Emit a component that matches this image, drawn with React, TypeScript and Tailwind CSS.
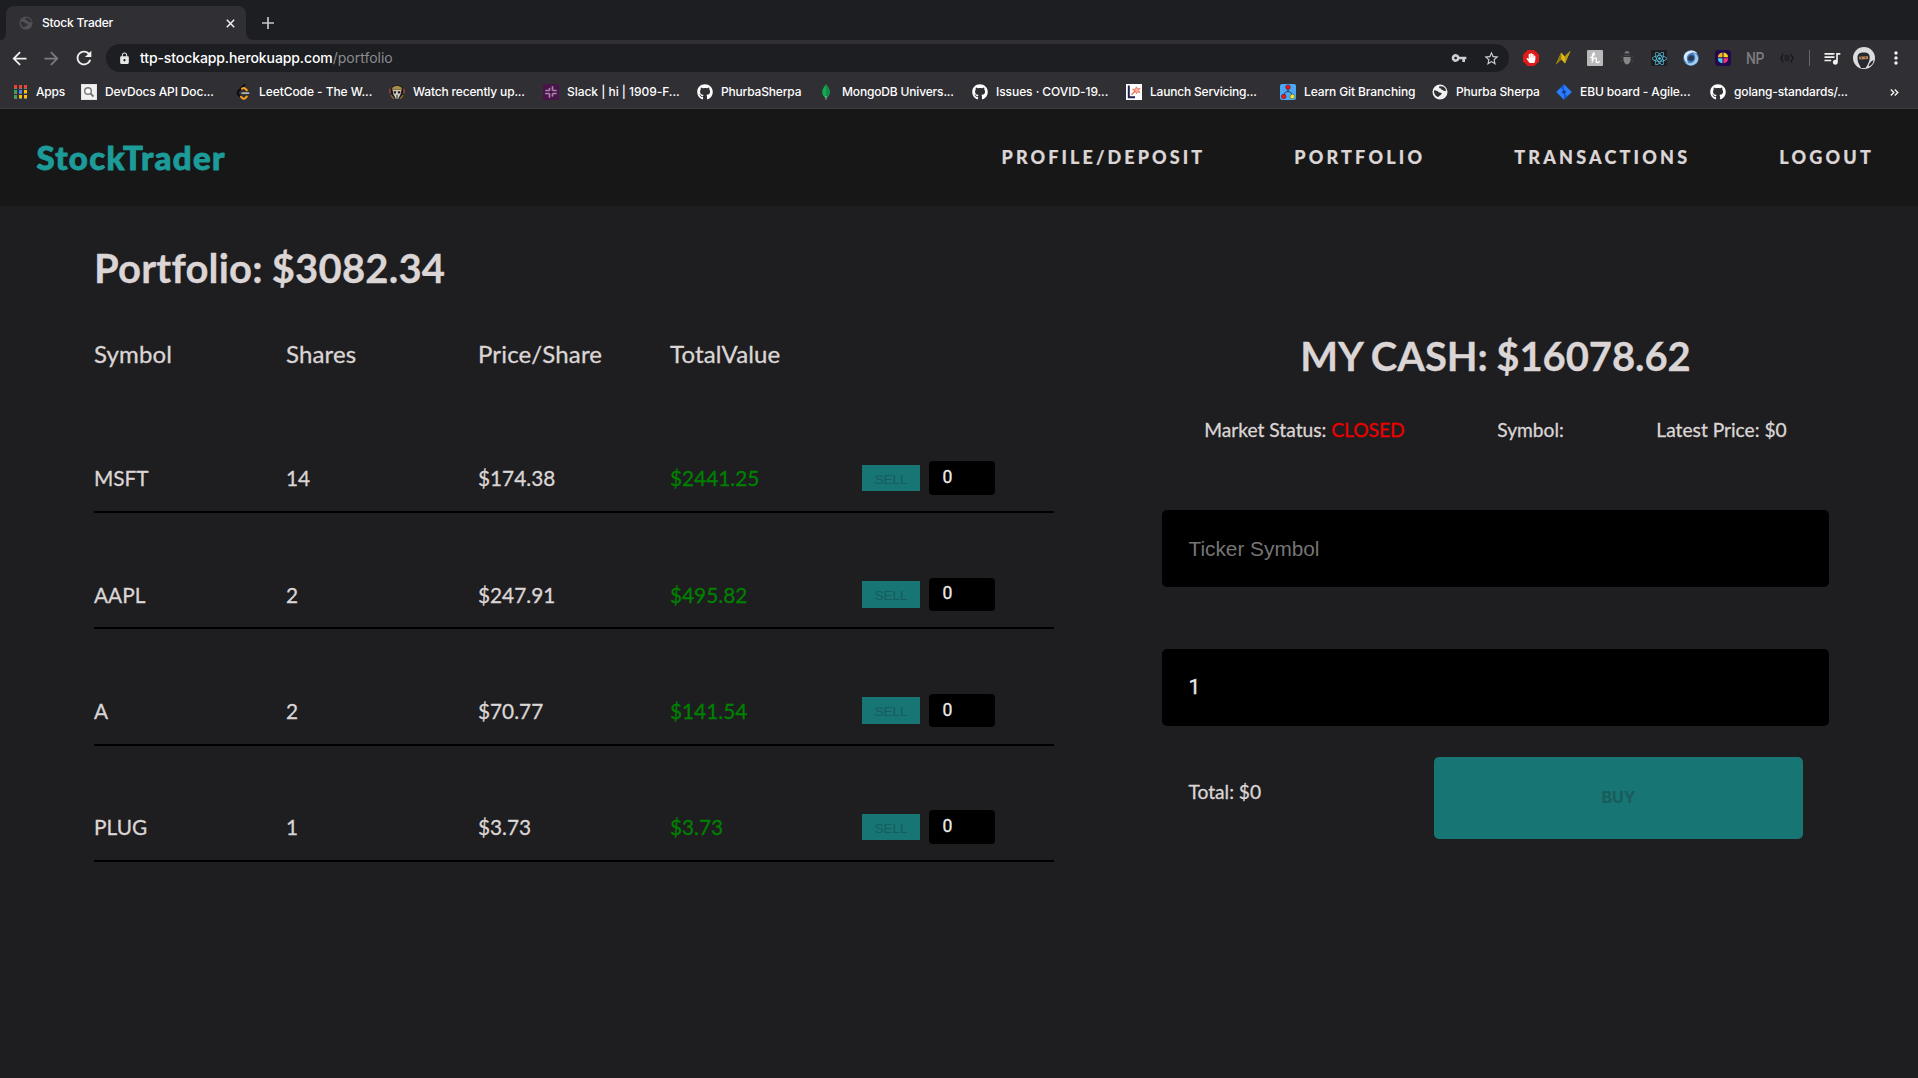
import type { ReactNode } from "react";
import { FaGithub, FaHandPaper, FaReact } from "react-icons/fa";
import {
  MdArrowBack,
  MdArrowForward,
  MdLock,
  MdMoreVert,
  MdQueueMusic,
  MdRefresh,
  MdStarBorder,
  MdVpnKey,
} from "react-icons/md";

function GlobeIcon({ disc, land, size }: { disc: string; land: string; size: number }) {
  return (
    <svg width={size} height={size} viewBox="0 0 16 16">
      <circle cx="8" cy="8" r="7.5" fill={disc} />
      <path d="M2 6.2c2 .3 3.400.2 4.200 1.500.7 1 2.300.5 3.200 1.300.8.9-.2 1.900-1.200 2.200-1.200.4-1.200 1.800-2.300 1.700C3.600 12.300 1.700 9.500 2 6.200z" fill={land} />
      <path d="M7.300 2.400c-.6 1-.1 1.800.9 1.900 1 .1.700 1.300 1.700 1.500 1.300.3 1.500 1.300 2.700 1.200l1.600-.3c-.5-2.700-2.800-4.900-6.900-4.300z" fill={land} />
    </svg>
  );
}

function AppsIcon() {
  const colors = ["#ea4335", "#ea4335", "#ea4335", "#34a853", "#4285f4", "#fbbc04", "#34a853", "#fbbc04", "#fbbc04"];
  return (
    <div className="grid h-[14px] w-[13px] grid-cols-3 gap-x-[2px] gap-y-px">
      {colors.map((c, i) => (
        <span key={i} className="border-b border-[#7b7b7b]" style={{ backgroundColor: c }} />
      ))}
    </div>
  );
}

function DevDocsIcon() {
  return (
    <svg width="16" height="16" viewBox="0 0 16 16">
      <rect width="16" height="16" fill="#e4e4e4" />
      <rect x="1" y="1" width="14" height="14" fill="#f1f1f1" />
      <circle cx="7" cy="7" r="3.300" fill="#fafafa" stroke="#777" strokeWidth="1.400" />
      <path d="M9.500 9.500l3 3" stroke="#777" strokeWidth="1.800" />
    </svg>
  );
}

function LeetCodeIcon() {
  return (
    <svg width="16" height="16" viewBox="0 0 16 16" fill="none" strokeLinecap="round">
      <path d="M9.500 1L3.500 7c-1.200 1.200-1.200 2.500 0 3.700L5 12.200" stroke="#0d0d0d" strokeWidth="2" />
      <path d="M7 4.800c1.200-1 2.300-1 3.300 0L11.800 6.300M6 12.800l1.200 1.200c1 1 2.200 1 3.200 0l1.400-1.500" stroke="#f9a11b" strokeWidth="2" />
      <path d="M7.200 9.200H13.500" stroke="#b3b3b3" strokeWidth="1.800" />
    </svg>
  );
}

function MaskIcon() {
  return (
    <svg width="17" height="16" viewBox="0 0 17 16">
      <path d="M3 2.500C5 .5 12 .5 14 2.500l1.500 4.500-1.200 4L12 14H5l-2.300-3-1.200-4z" fill="#1c1b1c" />
      <path d="M3.500 3.500C6 1 11 1 13.500 3.500l.3 2H3.200z" fill="#a98d4b" />
      <path d="M1 4.500v5M16 4.500v5" stroke="#b6403c" strokeWidth="1.400" />
      <path d="M3.800 5.800h9.400l-1 4.700L10 15H7l-2.200-4.500z" fill="#cfcabf" />
      <path d="M4.800 7.200h3l-.6 2.300H5.500zM9.200 7.200h3l-.7 2.300H9.800zM8 11h1v3.500H8z" fill="#1c1b1c" />
      <path d="M2 11.500l3.200 3.800M15 11.500l-3.200 3.800" stroke="#8c6c2c" strokeWidth="1.400" />
    </svg>
  );
}

function SlackIcon() {
  return (
    <svg width="16" height="16" viewBox="0 0 16 16" fill="none" stroke="#a883a8" strokeWidth="1.700" strokeLinecap="round">
      <rect width="16" height="16" fill="#48154b" stroke="none" />
      <path d="M6.500 4.500V6M9.500 2.800V6M3 6.500h3M10.800 6.500h2.200M2.800 9.500h2.400M6.500 9.900v3.200M9.500 10v1.800M10 9.500h3" />
    </svg>
  );
}

function MongoIcon() {
  return (
    <svg width="16" height="16" viewBox="0 0 16 16">
      <path d="M8 .3C9.500 3 11.800 4.600 11.800 8c0 2.800-1.700 4.800-3.400 6H7.600C5.900 12.800 4.200 10.800 4.200 8 4.200 4.600 6.500 3 8 .3z" fill="#13aa52" />
      <path d="M8 .3C9.500 3 11.800 4.600 11.800 8c0 2.800-1.700 4.800-3.400 6H8z" fill="#108c45" />
      <path d="M8 12v3.800" stroke="#a5b5a8" strokeWidth=".9" />
    </svg>
  );
}

function LaunchIcon() {
  return (
    <svg width="16" height="16" viewBox="0 0 16 16">
      <rect width="16" height="16" fill="#fff" />
      <path d="M2.800 1.500v11.800H9" stroke="#1f2352" strokeWidth="2" fill="none" />
      <path d="M5.500 10.800L9.500 6.800" stroke="#f0694f" strokeWidth="1.300" />
      <path d="M9.300 6.900L6.500 5.500l3-.4.8-2.300 1.300 2.100 2.500-.7-1.500 2.100 1.200 2.200-2.400-.6-1 1.800z" stroke="#f0694f" strokeWidth=".8" fill="#f8b4a6" />
    </svg>
  );
}

function GitBranchingIcon() {
  return (
    <svg width="16" height="16" viewBox="0 0 16 16">
      <rect width="16" height="16" rx="2" fill="#4aa8f5" />
      <path d="M8 3v4M4 11.500C4 9 6 7.500 8 7.500s4 1.500 4 4" stroke="#1d3850" strokeWidth="1" fill="none" />
      <circle cx="8" cy="3.200" r="2.300" fill="#f01414" stroke="#5a1c2c" strokeWidth=".6" />
      <circle cx="3.700" cy="12.500" r="2.300" fill="#f01414" stroke="#5a1c2c" strokeWidth=".6" />
      <circle cx="12.300" cy="12.500" r="2.300" fill="#f2ee2c" stroke="#5f6130" strokeWidth=".6" />
    </svg>
  );
}

function JiraIcon() {
  return (
    <svg width="16" height="16" viewBox="0 0 16 16">
      <path d="M8 .2L15.800 8 8 15.800.2 8z" fill="#2a7bff" />
      <path d="M8 .2L4.500 3.700 8 7zM8 15.800l3.500-3.500L8 9z" fill="#1558d0" />
      <path d="M8 5.800L10.200 8 8 10.200 5.800 8z" fill="#123a86" />
    </svg>
  );
}

const bookmarks: { label: string; icon: ReactNode; cell: string; tracking: string }[] = [
  { label: "Apps", icon: <AppsIcon />, cell: "w-[69px]", tracking: "tracking-[-0.2px]" },
  { label: "DevDocs API Doc...", icon: <DevDocsIcon />, cell: "w-[154px]", tracking: "tracking-[-0.15px]" },
  { label: "LeetCode - The W...", icon: <LeetCodeIcon />, cell: "w-[154px]", tracking: "tracking-[-0.07px]" },
  { label: "Watch recently up...", icon: <MaskIcon />, cell: "w-[154px]", tracking: "tracking-[-0.16px]" },
  { label: "Slack | hi | 1909-F...", icon: <SlackIcon />, cell: "w-[154px]", tracking: "tracking-[-0.04px]" },
  { label: "PhurbaSherpa", icon: <FaGithub size={16} />, cell: "w-[121px]", tracking: "tracking-[-0.18px]" },
  { label: "MongoDB Univers...", icon: <MongoIcon />, cell: "w-[154px]", tracking: "tracking-[-0.16px]" },
  { label: "Issues · COVID-19...", icon: <FaGithub size={16} />, cell: "w-[154px]", tracking: "tracking-[-0.07px]" },
  { label: "Launch Servicing...", icon: <LaunchIcon />, cell: "w-[154px]", tracking: "tracking-[-0.2px]" },
  { label: "Learn Git Branching", icon: <GitBranchingIcon />, cell: "w-[152px]", tracking: "tracking-[-0.12px]" },
  { label: "Phurba Sherpa", icon: <GlobeIcon disc="#f1f1f1" land="#303135" size={16} />, cell: "w-[124px]", tracking: "tracking-[-0.15px]" },
  { label: "EBU board - Agile...", icon: <JiraIcon />, cell: "w-[154px]", tracking: "tracking-[-0.1px]" },
  { label: "golang-standards/...", icon: <FaGithub size={16} />, cell: "w-[154px]", tracking: "tracking-[-0.15px]" },
];

const extensions: ReactNode[] = [
  <span className="grid size-4 place-items-center bg-[#e01a1a] text-white [clip-path:polygon(29%_0,71%_0,100%_29%,100%_71%,71%_100%,29%_100%,0_71%,0_29%)]">
    <FaHandPaper size={10} />
  </span>,
  <svg width="16" height="16" viewBox="0 0 16 16">
    <path d="M.8 14.500L6.200 2.500l3.500 4L15.500.8 10 13.500l-3.600-4z" fill="#e0b91c" />
    <path d="M.8 14.500l5.600-5-.2-7z" fill="#94790f" />
    <path d="M10 13.500l-.3-7L15.500.8z" fill="#b8960f" />
  </svg>,
  <svg width="16" height="16" viewBox="0 0 16 16">
    <rect width="16" height="16" rx="1" fill="#b9b9b9" />
    <path d="M3.500 7.500C6 6.500 7.800 4.500 7.300 3.200c-.8-1.200-2 1.300-2 4.300v5c.2-2.500 1.400-4.600 3-4.600 1.800 0 .8 2.600.9 3.700.1 1.500 1.800 1.300 3.300 0" fill="none" stroke="#fff" strokeWidth="1.300" strokeLinecap="round" />
  </svg>,
  <svg width="16" height="16" viewBox="0 0 16 16">
    <path d="M5.500 3.500a2.500 2.500 0 015 0z" fill="#777" />
    <path d="M4.500 5h7v1h-7z" fill="#484848" />
    <path d="M4.500 7h7c.6 3.500-1 7.500-3.500 7.500S3.900 10.500 4.500 7z" fill="#868686" />
    <path d="M1.500 6l2 1.500M14.500 6l-2 1.500M1.500 11h2M12.500 11h2" stroke="#484848" />
  </svg>,
  <span className="grid size-4 place-items-center bg-[#1e1e1e] text-[#5accf0]">
    <FaReact size={15} />
  </span>,
  <svg width="16" height="16" viewBox="0 0 16 16">
    <circle cx="8" cy="8" r="7.800" fill="#3f7fc4" />
    <path d="M2.500 3C6-.8 12-.2 14.500 3.500 10.500 1.500 6 2.500 4.300 6c-1.300 3 0 6 2.200 7.800C1.500 12.500-.8 6.800 2.500 3z" fill="#dbe9f7" />
    <path d="M13.500 13c-4 3.800-9 2.800-11.500-.8 4 2.300 8.300 1 9.700-2.200 1.300-3 .3-5.800-2-7.500 5 .8 7.300 6.700 3.800 10.500z" fill="#a9cbea" />
    <path d="M5.200 9.500C4.500 7 6.500 4.800 9 5.300c2 .4 2.600 2.500 1.700 4.200-1 1.900-4.700 2.300-5.500 0z" fill="#2b3a58" />
  </svg>,
  <svg width="16" height="16" viewBox="0 0 16 16">
    <rect width="16" height="16" rx="3.500" fill="#1e0a4c" />
    <path d="M7.500 2.500v4.700H2.800A5.300 5.300 0 017.500 2.500z" fill="#f5b22c" />
    <path d="M8.500 2.500a5.300 5.300 0 014.700 4.700H8.500z" fill="#ffd21f" />
    <path d="M2.800 8.200h4.700v5a5.300 5.300 0 01-4.700-5z" fill="#4cc9ec" />
    <path d="M8.500 8.200h4.700a5.300 5.300 0 01-4.700 5z" fill="#f0357f" />
  </svg>,
  <span className="scale-x-[0.82] font-['Roboto'] text-[17px] leading-none font-medium tracking-[-0.5px] text-[#7b7b7e]">NP</span>,
  <svg width="16" height="16" viewBox="0 0 16 16" fill="none" stroke="#151517" strokeWidth="1.200">
    <path d="M4.500 4C2.500 4 4 7.500 1.500 8 4 8.500 2.500 12 4.500 12M11.500 4c2 0 .5 3.500 3 4-2.500.5-1 4-3 4M5.500 6h5M5.500 8h5M5.500 10h5" />
  </svg>,
];

function Avatar() {
  return (
    <svg width="22" height="22" viewBox="0 0 22 22">
      <circle cx="11" cy="11" r="11" fill="#dcdcdc" />
      <path d="M4.500 10.500c0-3.800 2.500-5 6.200-5s6 1.200 6 5c0 3-1.200 5.500-2.500 8L12.500 21H8l-1.500-3c-1.200-2-2-4.500-2-7.500z" fill="#26292f" />
      <path d="M6 9.800l9-.5v2.700l-8.500.5z" fill="#c98e5c" />
      <path d="M7.500 11h1.700M11.800 10.800h1.700" stroke="#222" strokeWidth="1" />
      <path d="M15.500 19.500c.3-3 2-5 5-6.500-.2 3-1.800 5.500-5 6.500z" fill="#26292f" />
    </svg>
  );
}

function Browser() {
  return (
    <div className="h-[109px] w-full border-b border-[#3a393e] bg-[#302f34] font-['Inter',sans-serif] text-white">
      <div className="flex h-10 items-end bg-[#1d1e22]">
        <svg width="6" height="8" viewBox="0 0 6 8">
          <path d="M0 8C4 8 6 5 6 0v8z" fill="#302f34" />
        </svg>
        <div className="flex h-[34px] w-60 items-center rounded-t-lg bg-[#302f34] pl-[13px]">
          <GlobeIcon disc="#505156" land="#302f34" size={14} />
          <span className="ml-[9px] flex-1 text-xs font-medium tracking-[-0.2px]">Stock Trader</span>
          <svg width="9" height="9" viewBox="0 0 9 9" className="mr-[11px]">
            <path d="M.8.8l7.400 7.400M8.200.8L.8 8.200" stroke="#f1f1f1" strokeWidth="1.500" />
          </svg>
        </div>
        <svg width="8" height="8" viewBox="0 0 8 8">
          <path d="M8 8C3 8 0 5 0 0v8z" fill="#302f34" />
        </svg>
        <svg width="12" height="12" viewBox="0 0 12 12" className="mb-[11px] ml-2">
          <path d="M6 0v12M0 6h12" stroke="#c4c5c8" strokeWidth="1.700" />
        </svg>
      </div>

      <div className="flex h-9 items-center">
        <div className="flex w-[106px] items-center gap-[11px] pl-[9px] text-[#f1f1f1]">
          <MdArrowBack size={21} />
          <MdArrowForward size={21} className="text-[#7d7d81]" />
          <MdRefresh size={22} />
        </div>
        <div className="flex h-7 w-[1403px] items-center rounded-full bg-[#1d1e22] pl-3 text-sm leading-none">
          <MdLock size={13} className="text-[#e6e6e6]" />
          <span className="ml-[9px] font-medium tracking-[-0.1px]">ttp-stockapp.herokuapp.com</span>
          <span className="flex-1 text-[#8b8c90]">/portfolio</span>
          <div className="flex text-[#cfcfd2]">
            <span className="grid w-8 place-items-center">
              <MdVpnKey size={16} />
            </span>
            <span className="mr-[2px] grid w-8 place-items-center">
              <MdStarBorder size={17} />
            </span>
          </div>
        </div>
        <div className="ml-[6px] flex">
          {extensions.map((icon, i) => (
            <span key={i} className="grid h-4 w-8 place-items-center">
              {icon}
            </span>
          ))}
        </div>
        <span className="ml-[6px] h-4 w-px bg-[#66666b]" />
        <MdQueueMusic size={20} className="ml-3 text-[#f1f1f1]" />
        <span className="ml-[11px]">
          <Avatar />
        </span>
        <MdMoreVert size={20} className="ml-[11px] text-[#f1f1f1]" />
      </div>

      <div className="flex h-8 items-center pl-[12px]">
        {bookmarks.map((b) => (
          <div key={b.label} className={`flex shrink-0 items-center ${b.cell}`}>
            <span className="mr-2 flex w-4 shrink-0 justify-center">{b.icon}</span>
            <span className={`text-xs leading-4 font-medium whitespace-nowrap ${b.tracking}`}>{b.label}</span>
          </div>
        ))}
        <svg width="9" height="7" viewBox="0 0 9 7" className="ml-[26px]" fill="none" stroke="#f1f1f1" strokeWidth="1.400">
          <path d="M.8.500l3 3-3 3M4.800.500l3 3-3 3" />
        </svg>
      </div>
    </div>
  );
}

const holdings = [
  { symbol: "MSFT", shares: "14", price: "$174.38", total: "$2441.25" },
  { symbol: "AAPL", shares: "2", price: "$247.91", total: "$495.82" },
  { symbol: "A", shares: "2", price: "$70.77", total: "$141.54" },
  { symbol: "PLUG", shares: "1", price: "$3.73", total: "$3.73" },
];

function Holdings() {
  return (
    <section className="w-[960px] pt-[37.500px]">
      <h1 className="text-[40px] leading-[48px] font-bold tracking-[0.200px] [word-spacing:-1px]">Portfolio: $3082.34</h1>
      <div className="mt-[47px] grid grid-cols-5 text-2xl leading-[29px] tracking-[0.15px]">
        <span>Symbol</span>
        <span>Shares</span>
        <span>Price/Share</span>
        <span>TotalValue</span>
      </div>
      <div className="mt-[29.400px]">
        {holdings.map((h) => (
          <div key={h.symbol} className="grid h-[116.250px] grid-cols-5 items-end border-b-2 border-black text-[20.800px] leading-[25px]">
            <span className="pb-[20.700px]">{h.symbol}</span>
            <span className="pb-[20.700px]">{h.shares}</span>
            <span className="pb-[20.700px]">{h.price}</span>
            <span className="pb-[20.700px] text-[#008000]">{h.total}</span>
            <div className="flex items-center gap-[9px] pb-[16.400px]">
              <button className="h-[26.500px] w-[58px] bg-[#177573] pt-[3px] font-['Liberation_Sans',sans-serif] text-[13.330px] leading-none text-[#185c5c] [-webkit-text-stroke:0px]">
                SELL
              </button>
              <div className="flex h-[33.500px] w-[66px] items-center rounded-[4px] bg-black pl-[13.500px] font-['Roboto',sans-serif] text-[17.600px] leading-none text-[#efebeb]">
                0
              </div>
            </div>
          </div>
        ))}
      </div>
    </section>
  );
}

function Trade() {
  return (
    <section className="ml-[104px] w-[675px] pt-[125.500px]">
      <h1 className="text-center text-[40px] leading-[48px] font-bold tracking-[-0.080px] [word-spacing:-1px]">MY CASH: $16078.62</h1>
      <div className="mt-[38px] flex justify-around text-[19.200px] leading-[23px]">
        <span>
          Market Status: <span className="text-[#ee0000]">CLOSED</span>
        </span>
        <span>Symbol:</span>
        <span>Latest Price: $0</span>
      </div>
      <div className="mx-1 mt-[69px] flex h-[77px] items-center rounded-[5px] bg-black pt-[2px] pl-[26.500px] font-['Liberation_Sans',sans-serif] text-[20.800px] text-[#757575] [-webkit-text-stroke:0px]">
        Ticker Symbol
      </div>
      <div className="mx-1 mt-[62px] flex h-[77px] items-center rounded-[5px] bg-black pt-px pl-[26.500px] font-['Roboto',sans-serif] text-[21px] text-[#efebeb]">
        1
      </div>
      <div className="mt-[31px] flex justify-between pr-[30px] pl-[30.500px]">
        <span className="mt-[23px] text-[19.200px] leading-[23px]">Total: $0</span>
        <button className="h-[82px] w-[369px] rounded-[5px] bg-[#177573] pb-[2px] font-['Inter',sans-serif] text-base font-bold text-[#185c5c] [-webkit-text-stroke:0px]">
          BUY
        </button>
      </div>
    </section>
  );
}

export default function App() {
  return (
    <div className="h-[1078px] w-[1918px] overflow-hidden bg-[#1e1e20] font-['Lato',sans-serif] text-[#dbd5d5]">
      <Browser />
      <header className="flex h-[97px] items-center justify-between bg-[#171717] pr-11 pl-[36.500px]">
        <span className="text-[33px] leading-none font-black tracking-[1.300px] text-[#1c9b98] [-webkit-text-stroke:0.9px]">StockTrader</span>
        <nav className="flex gap-[89px] pb-px text-[18px] leading-none font-black tracking-[3.200px] [-webkit-text-stroke:0.2px]">
          <span className="tracking-[3.080px]">PROFILE/DEPOSIT</span>
          <span>PORTFOLIO</span>
          <span>TRANSACTIONS</span>
          <span>LOGOUT</span>
        </nav>
      </header>
      <main className="flex pl-[94px] [-webkit-text-stroke:0.3px]">
        <Holdings />
        <Trade />
      </main>
    </div>
  );
}
